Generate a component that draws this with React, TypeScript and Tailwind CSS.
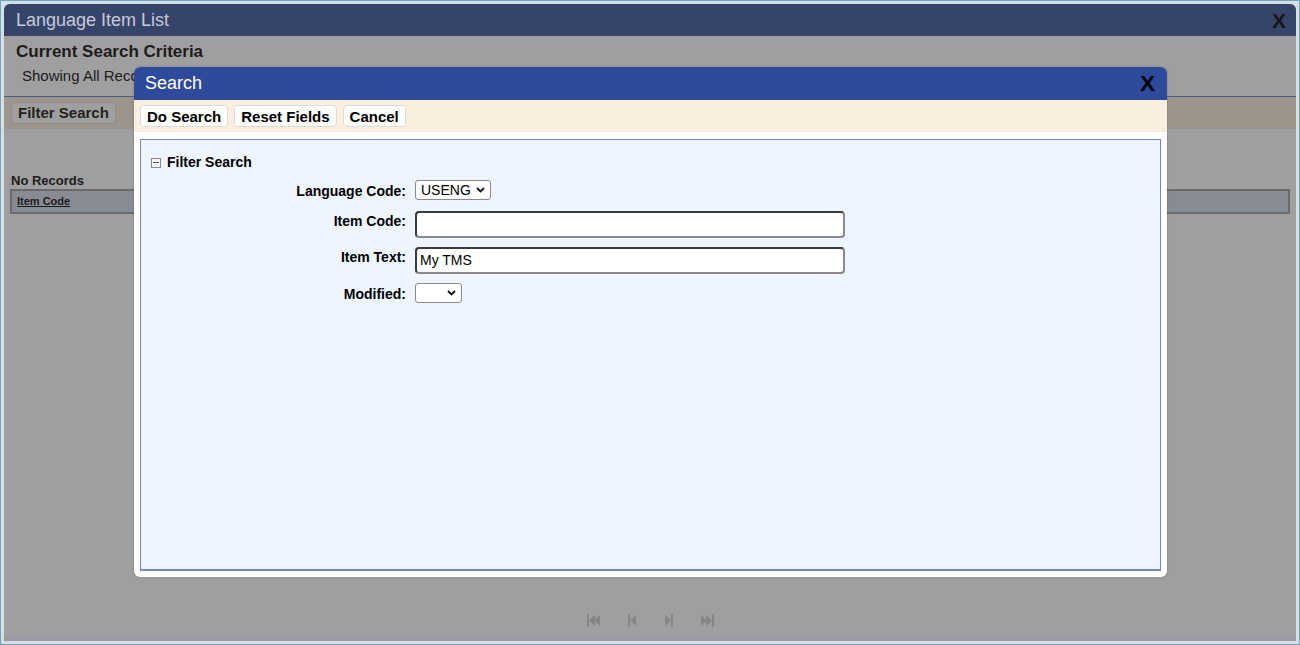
import React from 'react';

const FONT = { fontFamily: '"Liberation Sans", Arial, sans-serif' };

function PagerIcon({ kind }: { kind: 'first' | 'prev' | 'next' | 'last' }) {
  // little grey pager glyphs, disabled look
  const c = '#868686';
  if (kind === 'first')
    return (
      <svg width="14" height="13" viewBox="0 0 14 13">
        <rect x="0" y="0" width="2" height="13" fill={c} />
        <path d="M2 6.5 L8 1 V12 Z" fill={c} />
        <path d="M7 6.5 L13 1 V12 Z" fill={c} />
      </svg>
    );
  if (kind === 'prev')
    return (
      <svg width="9" height="13" viewBox="0 0 9 13">
        <rect x="0" y="0" width="2" height="13" fill={c} />
        <path d="M2 6.5 L8 1 V12 Z" fill={c} />
      </svg>
    );
  if (kind === 'next')
    return (
      <svg width="9" height="13" viewBox="0 0 9 13">
        <path d="M1 1 L7 6.5 L1 12 Z" fill={c} />
        <rect x="7" y="0" width="2" height="13" fill={c} />
      </svg>
    );
  return (
    <svg width="14" height="13" viewBox="0 0 14 13">
      <path d="M1 1 L7 6.5 L1 12 Z" fill={c} />
      <path d="M6 1 L12 6.5 L6 12 Z" fill={c} />
      <rect x="12" y="0" width="2" height="13" fill={c} />
    </svg>
  );
}

function Chevron() {
  return (
    <svg width="9" height="6" viewBox="0 0 9 6">
      <path d="M1 1 L4.5 4.5 L8 1" fill="none" stroke="#111" strokeWidth="1.8" />
    </svg>
  );
}

function ToolButton({ label }: { label: string }) {
  return (
    <button className="h-[22px] px-[6px] rounded-[4px] bg-white border border-[#dcdcdc] text-[15px] font-bold text-black leading-none">
      {label}
    </button>
  );
}

function SearchDialog() {
  return (
    <div className="absolute left-[133px] top-[66px] w-[1033px] h-[510px] bg-white rounded-md flex flex-col shadow-[0_0_2px_rgba(0,0,0,0.3)]">
      <div className="h-[33px] bg-[#2d4a9b] rounded-t-md flex items-center justify-between pl-[11px] pr-[12px]">
        <span className="text-white text-[18px]">Search</span>
        <span className="text-black text-[22px] font-bold leading-none">X</span>
      </div>
      <div className="h-[32px] bg-[#faefdf] flex items-center gap-[6px] px-[6px]">
        <ToolButton label="Do Search" />
        <ToolButton label="Reset Fields" />
        <ToolButton label="Cancel" />
      </div>
      <div className="flex-1 px-[6px] pt-[7px] pb-[6px]">
        <div className="h-full bg-[#eef5fe] border border-[#7a86c4] border-b-2 pt-[12px] pl-[10px]">
          <div className="flex items-center gap-[6px]">
            <span className="w-[10px] h-[10px] border border-[#8a8a8a] bg-[#f4f4f4] flex items-center justify-center">
              <span className="w-[6px] h-[1px] bg-[#555]" />
            </span>
            <span className="text-[14px] font-bold text-black">Filter Search</span>
          </div>
          <div className="grid grid-cols-[255px_1fr] gap-x-[9px] gap-y-[9px] mt-[7px] text-[14px]">
            <div className="text-right font-bold pt-[1px]">Language Code:</div>
            <div>
              <div className="w-[76px] h-[20px] bg-white border border-[#8a8a8a] rounded-[3px] flex items-center justify-between px-[5px]">
                <span className="text-[14px]">USENG</span>
                <Chevron />
              </div>
            </div>
            <div className="text-right font-bold">Item Code:</div>
            <div>
              <div className="w-[430px] h-[27px] bg-white border-2 border-[#3a3a3a] border-b-[#8a8a8a] border-r-[#8a8a8a] rounded-[4px]" />
            </div>
            <div className="text-right font-bold">Item Text:</div>
            <div>
              <div className="w-[430px] h-[27px] bg-white border-2 border-[#3a3a3a] border-b-[#8a8a8a] border-r-[#8a8a8a] rounded-[4px] flex items-center px-[3px]">
                <span className="text-[14px]">My TMS</span>
              </div>
            </div>
            <div className="text-right font-bold pt-[1px]">Modified:</div>
            <div>
              <div className="w-[47px] h-[20px] bg-white border border-[#8a8a8a] rounded-[3px] flex items-center justify-end px-[5px]">
                <Chevron />
              </div>
            </div>
          </div>
        </div>
      </div>
    </div>
  );
}

export default function App() {
  return (
    <div style={FONT} className="relative w-[1300px] h-[645px] bg-[#d8dee2] border border-[#6fa6c0] p-[3px] overflow-hidden text-black">
      <div className="h-full flex flex-col rounded-t-md bg-[#9f9f9f] overflow-hidden">
        {/* title bar */}
        <div className="h-[32px] bg-[#36446b] flex items-center justify-between pl-[12px] pr-[10px] shrink-0">
          <span className="text-[18px] text-[#c6cad6]">Language Item List</span>
          <span className="text-[21px] font-bold text-[#161616] leading-none">X</span>
        </div>

        {/* criteria */}
        <div className="pl-[12px] pt-[6px] h-[60px] shrink-0">
          <div className="text-[17px] font-bold text-[#1c1c1c] leading-[20px]">Current Search Criteria</div>
          <div className="text-[15px] text-[#1c1c1c] pl-[6px] mt-[5px] leading-[18px]">Showing All Records</div>
        </div>
        <div className="h-px bg-[#4c5a8a] shrink-0" />
        <div className="h-[32px] bg-[#9b958c] flex items-center pl-[7px] shrink-0">
          <div className="h-[22px] px-[6px] rounded-[4px] bg-[#a09f9d] border border-[#8e8d8a] text-[15px] font-bold text-[#1f1f1f] flex items-center">
            Filter Search
          </div>
        </div>

        {/* grid */}
        <div className="pl-[6px] pr-[6px] pt-[44px] shrink-0">
          <div className="text-[13px] font-bold text-[#1c1c1c] leading-[16px] pl-[1px]">No Records</div>
          <div className="h-[25px] bg-[#878b94] border-2 border-[#6b6b6b] flex items-center pl-[5px]">
            <span className="text-[11px] font-bold underline text-[#1c1c1c]">Item Code</span>
          </div>
        </div>

        <div className="flex-1" />

        {/* pager */}
        <div className="h-[24px] flex items-center justify-center gap-[27px] shrink-0">
          <PagerIcon kind="first" />
          <PagerIcon kind="prev" />
          <PagerIcon kind="next" />
          <PagerIcon kind="last" />
        </div>
        <div className="h-[5px] shrink-0" />
        <div className="h-[4px] bg-[#9a9ba2] shrink-0" />
      </div>

      <SearchDialog />
    </div>
  );
}
